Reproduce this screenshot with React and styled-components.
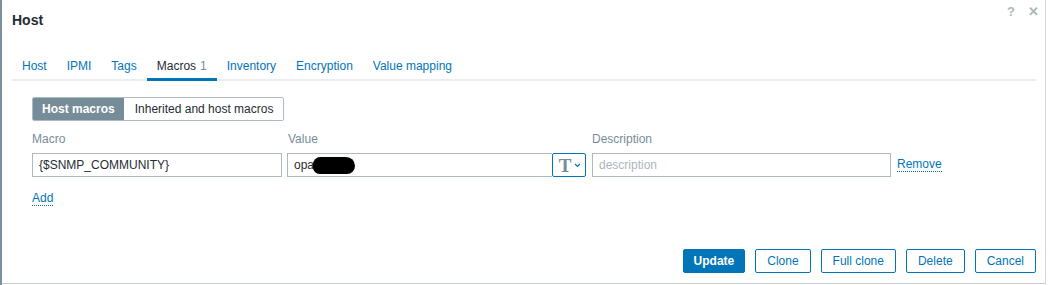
import React from 'react';
import styled, { createGlobalStyle } from 'styled-components';

const GlobalStyle = createGlobalStyle`
  html, body {
    margin: 0;
    padding: 0;
    background: #ffffff;
  }
  body {
    font-family: "Liberation Sans", Arial, sans-serif;
    font-size: 12px;
    color: #1f2c33;
  }
`;

const Page = styled.div`
  display: flex;
  width: 1051px;
  height: 285px;
  overflow: hidden;
  border-left: 2px solid #7b909c;
  box-sizing: border-box;
`;

const Dialog = styled.div`
  width: 1044px;
  height: 284px;
  box-sizing: border-box;
  border-right: 1px solid #d2d9dd;
  border-bottom: 1px solid #c5cdd2;
  background: #ffffff;
  display: flex;
  flex-direction: column;
`;

const Header = styled.div`
  height: 40px;
  display: flex;
  align-items: center;
  justify-content: space-between;
  padding: 0 7px 0 10px;
`;

const Title = styled.h4`
  margin: 0;
  font-size: 14px;
  font-weight: bold;
  color: #1f2c33;
`;

const HeaderTools = styled.div`
  display: flex;
  gap: 12px;
  align-self: flex-start;
  margin-top: 4px;
  color: #acb7bd;
  font-size: 13px;
  font-weight: bold;
`;

const Tool = styled.span`
  display: inline-block;
  width: 10px;
  text-align: center;
`;

const Body = styled.div`
  padding: 0 9px 0 10px;
  flex: 1;
  display: flex;
  flex-direction: column;
`;

const TabBar = styled.ul`
  list-style: none;
  margin: 12px 0 0 0;
  padding: 0;
  display: flex;
  border-bottom: 2px solid #ebeef0;
`;

const Tab = styled.li`
  padding: 7px 10px 5px 10px;
  line-height: 14px;
  color: ${(p) => (p.$active ? '#1f2c33' : '#0275b8')};
  border-bottom: 3px solid ${(p) => (p.$active ? '#0275b8' : 'transparent')};
  margin-bottom: -2px;
`;

const Count = styled.span`
  color: #768d99;
  margin-left: 4px;
`;

const Content = styled.div`
  padding: 16px 0 0 20px;
`;

const Segment = styled.div`
  display: inline-flex;
  height: 24px;
  box-sizing: border-box;
  border: 1px solid #acbbc2;
  border-radius: 2px;
  overflow: hidden;
`;

const SegmentItem = styled.label`
  display: flex;
  align-items: center;
  padding: ${(p) => (p.$active ? '0 9px' : '0 10px 0 11px')};
  background: ${(p) => (p.$active ? '#768d99' : '#ffffff')};
  color: ${(p) => (p.$active ? '#ffffff' : '#1f2c33')};
  font-weight: ${(p) => (p.$active ? 'bold' : 'normal')};
`;

const MacroTable = styled.div`
  display: grid;
  grid-template-columns: 250px 298px 299px auto;
  column-gap: 6px;
  margin-top: 9px;
`;

const Label = styled.div`
  color: #768d99;
  line-height: 14px;
  padding: 2px 0 7px 0;
`;

const Input = styled.div`
  height: 24px;
  box-sizing: border-box;
  border: 1px solid #acbbc2;
  display: flex;
  align-items: center;
  padding: 0 6px;
  color: ${(p) => (p.$placeholder ? '#acb7bd' : '#1f2c33')};
  background: #ffffff;
`;

const ValueGroup = styled.div`
  display: flex;
  margin-left: -1px;
`;

const ValueInput = styled(Input)`
  flex: 1;
  border-right: none;
`;

const Redacted = styled.span`
  display: inline-block;
  width: 42px;
  height: 17px;
  background: #000000;
  border-radius: 9px 11px 10px 8px;
  margin-left: -1px;
`;

const TypeButton = styled.button`
  width: 34px;
  height: 24px;
  box-sizing: border-box;
  border: 1px solid #0275b8;
  border-radius: 2px;
  background: #ffffff;
  display: flex;
  align-items: center;
  justify-content: center;
  gap: 3px;
  padding: 0 0 0 2px;
  cursor: pointer;
`;

const TypeGlyph = styled.span`
  font-family: "Liberation Serif", "Times New Roman", serif;
  font-weight: bold;
  font-size: 19px;
  color: #768d99;
  line-height: 1;
`;

const RemoveCell = styled.div`
  display: flex;
  align-items: center;
  height: 24px;
`;

const Link = styled.a`
  color: #0275b8;
  text-decoration: none;
  border-bottom: 1px dotted #0275b8;
  line-height: 13px;
  cursor: pointer;
`;

const AddRow = styled.div`
  margin-top: 14px;
`;

const Footer = styled.div`
  margin-top: auto;
  display: flex;
  justify-content: flex-end;
  gap: 10px;
  padding: 0 0 10px 0;
`;

const Button = styled.button`
  height: 24px;
  box-sizing: border-box;
  padding: 0 ${(p) => (p.$primary ? '10px' : '11px')};
  border-radius: 2px;
  border: 1px solid #0275b8;
  background: ${(p) => (p.$primary ? '#0275b8' : '#ffffff')};
  color: ${(p) => (p.$primary ? '#ffffff' : '#0275b8')};
  font-family: "Liberation Sans", Arial, sans-serif;
  font-size: 12px;
  font-weight: ${(p) => (p.$primary ? 'bold' : 'normal')};
  cursor: pointer;
`;

const Chevron = () => (
  <svg width="7" height="5" viewBox="0 0 7 5">
    <path d="M1 1 L3.5 3.5 L6 1" fill="none" stroke="#0275b8" strokeWidth="1.2" />
  </svg>
);

const tabs = ['Host', 'IPMI', 'Tags', 'Macros', 'Inventory', 'Encryption', 'Value mapping'];

const App = () => (
  <>
    <GlobalStyle />
    <Page>
      <Dialog>
        <Header>
          <Title>Host</Title>
          <HeaderTools>
            <Tool>?</Tool>
            <Tool>✕</Tool>
          </HeaderTools>
        </Header>
        <Body>
          <TabBar>
            {tabs.map((t) => (
              <Tab key={t} $active={t === 'Macros'}>
                {t}
                {t === 'Macros' && <Count>1</Count>}
              </Tab>
            ))}
          </TabBar>
          <Content>
            <Segment>
              <SegmentItem $active>Host macros</SegmentItem>
              <SegmentItem>Inherited and host macros</SegmentItem>
            </Segment>
            <MacroTable>
              <Label>Macro</Label>
              <Label>Value</Label>
              <Label>Description</Label>
              <div />
              <Input>{'{$SNMP_COMMUNITY}'}</Input>
              <ValueGroup>
                <ValueInput>
                  opa<Redacted />
                </ValueInput>
                <TypeButton>
                  <TypeGlyph>T</TypeGlyph>
                  <Chevron />
                </TypeButton>
              </ValueGroup>
              <Input $placeholder>description</Input>
              <RemoveCell>
                <Link>Remove</Link>
              </RemoveCell>
            </MacroTable>
            <AddRow>
              <Link>Add</Link>
            </AddRow>
          </Content>
          <Footer>
            <Button $primary>Update</Button>
            <Button>Clone</Button>
            <Button>Full clone</Button>
            <Button>Delete</Button>
            <Button>Cancel</Button>
          </Footer>
        </Body>
      </Dialog>
    </Page>
  </>
);

export default App;
